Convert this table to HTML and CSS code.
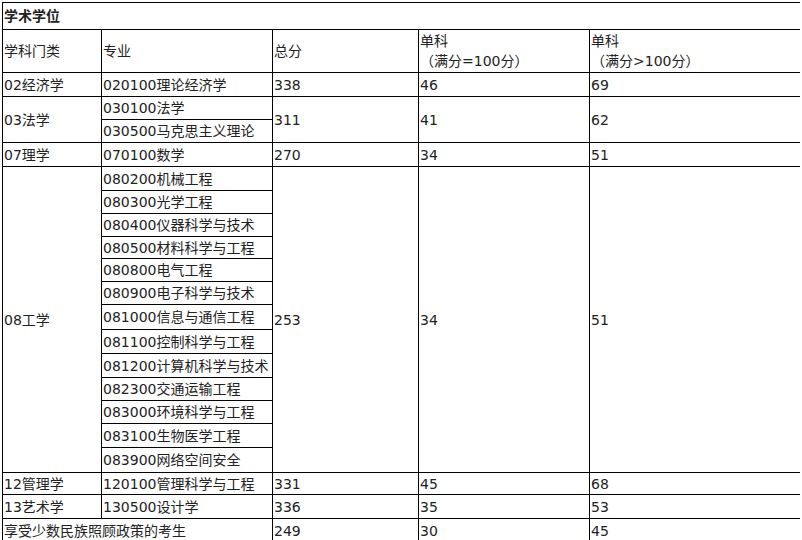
FILE: index.html
```html
<!DOCTYPE html>
<html lang="zh-CN">
<head>
<meta charset="utf-8">
<title>学术学位</title>
<link rel="stylesheet" href="styles.css">
</head>
<body>
<table class="score">
  <colgroup>
    <col class="c1"><col class="c2"><col class="c3"><col class="c4"><col class="c5">
  </colgroup>
  <tr class="r27"><td colspan="5" class="title">学术学位</td></tr>
  <tr class="r43">
    <td>学科门类</td><td>专业</td><td>总分</td>
    <td>单科<br>（满分=100分）</td><td>单科<br>（满分&gt;100分）</td>
  </tr>
  <tr class="r24"><td>02经济学</td><td>020100理论经济学</td><td>338</td><td>46</td><td>69</td></tr>
  <tr class="r23"><td rowspan="2">03法学</td><td>030100法学</td><td rowspan="2">311</td><td rowspan="2">41</td><td rowspan="2">62</td></tr>
  <tr class="r23"><td>030500马克思主义理论</td></tr>
  <tr class="r24"><td>07理学</td><td>070100数学</td><td>270</td><td>34</td><td>51</td></tr>
  <tr class="r24"><td rowspan="13">08工学</td><td>080200机械工程</td><td rowspan="13">253</td><td rowspan="13">34</td><td rowspan="13">51</td></tr>
  <tr class="r23"><td>080300光学工程</td></tr>
  <tr class="r23"><td>080400仪器科学与技术</td></tr>
  <tr class="r22"><td>080500材料科学与工程</td></tr>
  <tr class="r23"><td>080800电气工程</td></tr>
  <tr class="r23"><td>080900电子科学与技术</td></tr>
  <tr class="r25"><td>081000信息与通信工程</td></tr>
  <tr class="r24"><td>081100控制科学与工程</td></tr>
  <tr class="r24"><td>081200计算机科学与技术</td></tr>
  <tr class="r23"><td>082300交通运输工程</td></tr>
  <tr class="r23"><td>083000环境科学与工程</td></tr>
  <tr class="r24"><td>083100生物医学工程</td></tr>
  <tr class="r25"><td>083900网络空间安全</td></tr>
  <tr class="r22"><td>12管理学</td><td>120100管理科学与工程</td><td>331</td><td>45</td><td>68</td></tr>
  <tr class="r24"><td>13艺术学</td><td>130500设计学</td><td>336</td><td>35</td><td>53</td></tr>
  <tr class="r24"><td colspan="2">享受少数民族照顾政策的考生</td><td>249</td><td>30</td><td>45</td></tr>
</table>
</body>
</html>
```

FILE: styles.css
```css
html, body {
  background: #fff;
}
body {
  margin: 2px;
  font-family: "DejaVu Sans", "Noto Sans CJK SC", sans-serif;
  font-size: 14px;
  color: #222;
}
.score {
  border-collapse: collapse;
  table-layout: fixed;
  width: 799px;
}
.c1 { width: 99px; }
.c2 { width: 171px; }
.c3 { width: 146px; }
.c4 { width: 171px; }
.c5 { width: 211px; }
.score td {
  border: 1px solid #000;
  padding: 0 1px;
  line-height: 20px;
  vertical-align: middle;
  text-align: left;
  white-space: nowrap;
  overflow: hidden;
}
.score .title {
  font-weight: bold;
}
.r22 { height: 22px; }
.r23 { height: 23px; }
.r24 { height: 24px; }
.r25 { height: 25px; }
.r27 { height: 27px; }
.r43 { height: 43px; }
```
